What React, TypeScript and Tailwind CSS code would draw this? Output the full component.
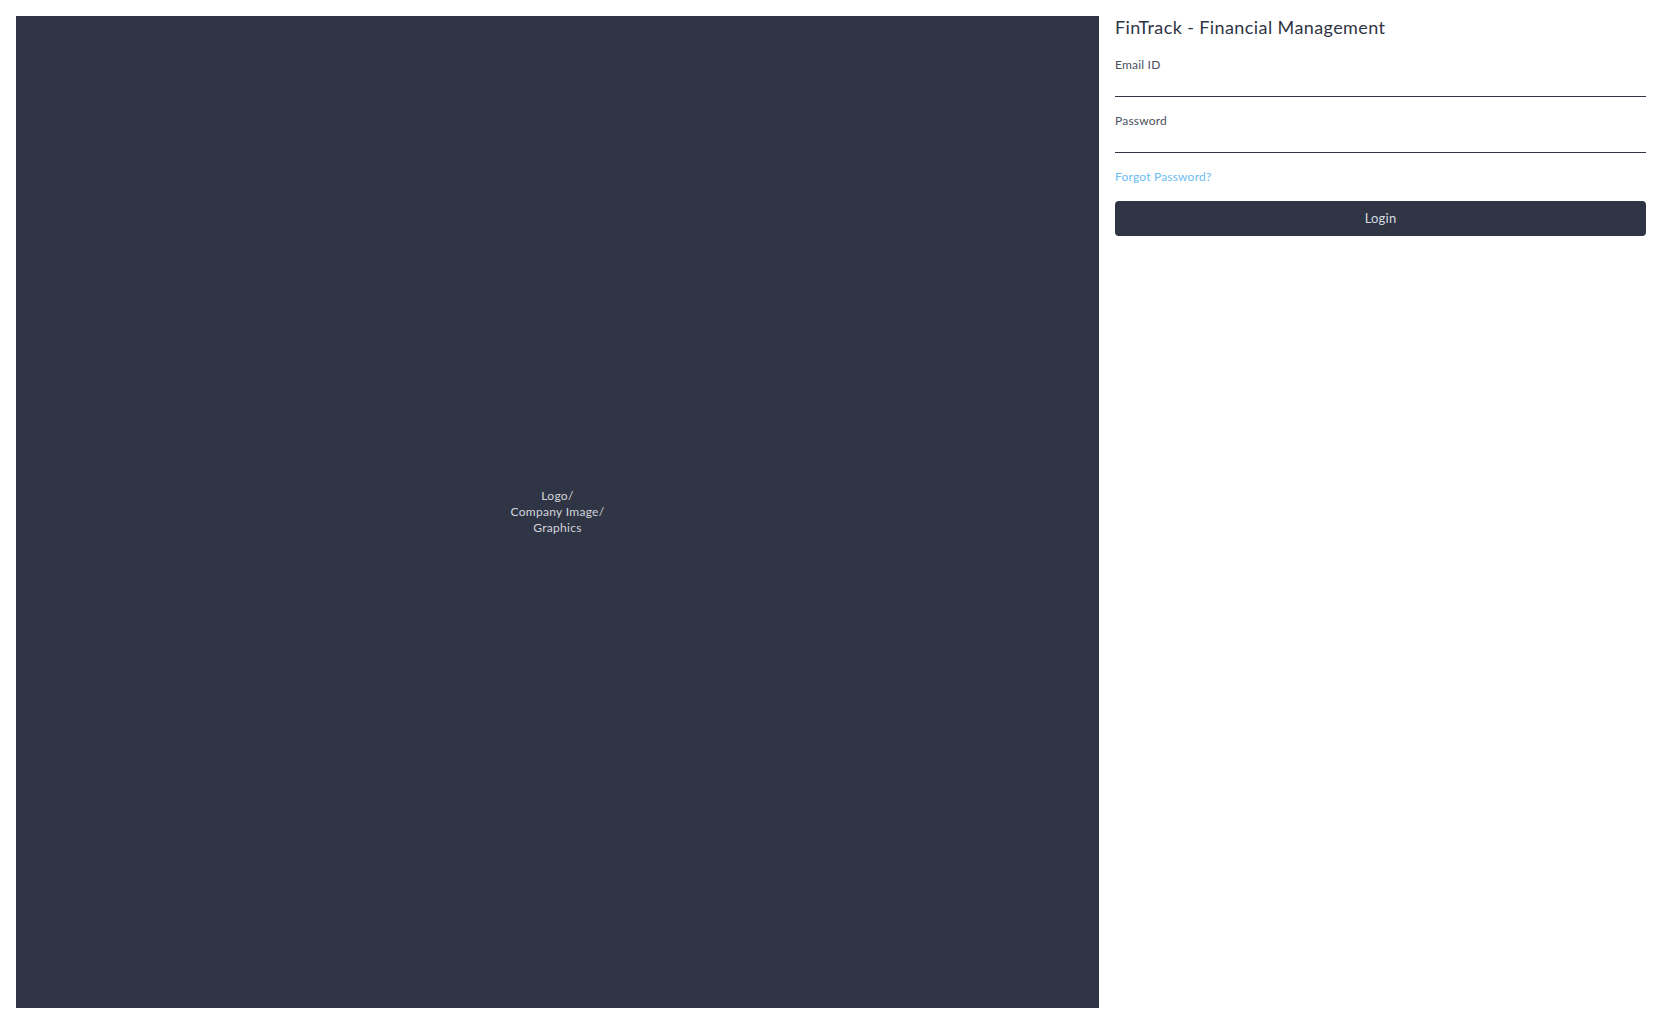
import { useState } from "react";

export default function App() {
  const [email, setEmail] = useState("");
  const [password, setPassword] = useState("");

  return (
    <div
      className="grid h-screen grid-cols-[1083px_1fr] gap-4 bg-white p-4"
      style={{ fontFamily: "Lato, 'Noto Sans', sans-serif" }}
    >
      {/* Brand / graphics placeholder */}
      <div className="flex items-center justify-center bg-[#2f3545]">
        <p className="text-center text-xs leading-4 tracking-[0.3px] text-[#d3d6dd]">
          Logo/
          <br />
          Company Image/
          <br />
          Graphics
        </p>
      </div>

      {/* Login form */}
      <form className="flex flex-col gap-4" onSubmit={(e) => e.preventDefault()}>
        <h1 className="mb-[3px] text-lg leading-[22px] tracking-[0.4px] text-[#2f3545]">
          FinTrack - Financial Management
        </h1>

        <div className="flex flex-col">
          <label htmlFor="email" className="text-xs leading-4 tracking-[0.2px] text-[#4b505c]">
            Email ID
          </label>
          <input
            id="email"
            type="email"
            value={email}
            onChange={(e) => setEmail(e.target.value)}
            className="h-6 border-b border-[#2f3545] bg-transparent text-sm text-[#2f3545] outline-none"
          />
        </div>

        <div className="flex flex-col">
          <label htmlFor="password" className="text-xs leading-4 tracking-[0.2px] text-[#4b505c]">
            Password
          </label>
          <input
            id="password"
            type="password"
            value={password}
            onChange={(e) => setPassword(e.target.value)}
            className="h-6 border-b border-[#2f3545] bg-transparent text-sm text-[#2f3545] outline-none"
          />
        </div>

        <a href="#" className="self-start text-xs leading-4 tracking-[0.2px] text-[#6cbcf3]">
          Forgot Password?
        </a>

        <button
          type="submit"
          className="h-[35px] w-full rounded bg-[#2f3545] text-[13px] tracking-[0.2px] text-[#d8dbe1]"
        >
          Login
        </button>
      </form>
    </div>
  );
}
